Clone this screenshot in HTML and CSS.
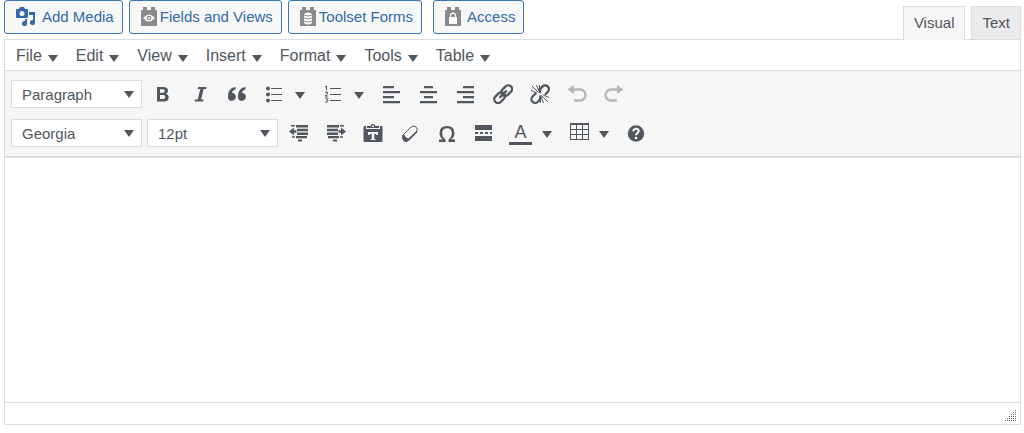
FILE: index.html
```html
<!DOCTYPE html>
<html lang="en">
<head>
    <meta charset="UTF-8">
    <meta name="viewport" content="width=device-width, initial-scale=1.0">
    <title>Edit Post</title>
    <link rel="stylesheet" href="styles.css">
</head>
<body>
    <div class="editor-tools">
        <div class="media-buttons">
            <button type="button" class="media-button">
                <svg class="media-icon" viewBox="0 0 20 20"><path fill-rule="evenodd" d="M1 2h2l1-2h4l1 2h2q1 0 1 1v7q0 1-1 1H1q-1 0-1-1V3q0-1 1-1zm5 2a2.500 2.500 0 1 0 0 5 2.500 2.500 0 0 0 0-5z"/><path d="M13 5h6v10.500a2.500 2.500 0 1 1-2-2.400V8h-4zM9 12h2v4.500a2.500 2.500 0 1 1-2-2.400z"/></svg>
                Add Media
            </button>
            <button type="button" class="media-button">
                <svg class="brick-icon" viewBox="0 0 16 19"><path d="M0 3h2V0h4v3h4V0h4v3h2v16H0z"/><path class="cut" d="M2 11q6-7 12 0-6 7-12 0z"/><circle cx="8" cy="11" r="2.300"/><circle class="cut" cx="8" cy="11" r="1"/></svg>
                Fields and Views
            </button>
            <button type="button" class="media-button">
                <svg class="brick-icon" viewBox="0 0 16 19"><path d="M0 3h2V0h4v3h4V0h4v3h2v16H0z"/><path class="cut" d="M4 7q4-3 8 0v9q-4 3-8 0z"/><path class="line" d="M4 8q4 2 8 0M4 11q4 2 8 0M4 14q4 2 8 0"/></svg>
                Toolset Forms
            </button>
            <button type="button" class="media-button access">
                <svg class="brick-icon" viewBox="0 0 16 19"><path d="M0 3h2V0h4v3h4V0h4v3h2v16H0z"/><path class="cut" fill-rule="evenodd" d="M4 10h1V8.500a3 3 0 0 1 6 0V10h1v7H4zm2.200 0h3.600V8.500a1.800 1.800 0 0 0-3.600 0z"/></svg>
                Access
            </button>
        </div>
        <div class="editor-tabs">
            <button type="button" class="tab active">Visual</button>
            <button type="button" class="tab">Text</button>
        </div>
    </div>

    <div class="editor">
        <div class="menubar">
            <button type="button" class="menu">File <span class="caret"></span></button>
            <button type="button" class="menu">Edit <span class="caret"></span></button>
            <button type="button" class="menu">View <span class="caret"></span></button>
            <button type="button" class="menu">Insert <span class="caret"></span></button>
            <button type="button" class="menu">Format <span class="caret"></span></button>
            <button type="button" class="menu">Tools <span class="caret"></span></button>
            <button type="button" class="menu">Table <span class="caret"></span></button>
        </div>

        <div class="toolbar">
            <div class="toolbar-row">
                <label class="listbox">
                    <select aria-label="Block format">
                        <option>Paragraph</option>
                        <option>Heading 1</option>
                        <option>Heading 2</option>
                        <option>Preformatted</option>
                    </select>
                    <span class="caret"></span>
                </label>
                <div class="button-group">
                    <button type="button" class="tool" aria-label="Bold">
                        <svg viewBox="0 0 20 20"><path fill-rule="evenodd" d="M4 3h6.500q4.500 0 4.500 3.700 0 2.500-2.300 3.100 3 .6 3 3.500 0 4.200-5 4.200H4zm3 2.300v3.500h2.800q2 0 2-1.800 0-1.700-2-1.700zm0 5.700v4.100h3q2.300 0 2.300-2.100 0-2-2.300-2z"/></svg>
                    </button>
                    <button type="button" class="tool" aria-label="Italic">
                        <svg viewBox="0 0 20 20"><path d="M8 3h8.500l-.4 2h-2.500l-2.500 10.500h2.500l-.4 2H4.700l.4-2h2.700L10.300 5H7.600z"/></svg>
                    </button>
                    <button type="button" class="tool" aria-label="Blockquote">
                        <svg viewBox="0 0 20 20"><path d="M8.500 3v2.500Q5.300 6 5 9a3.900 3.900 0 1 1-4 4.200Q.3 4.300 8.500 3zM18.500 3v2.500q-3.200.5-3.500 3.500a3.900 3.900 0 1 1-4 4.200Q10.300 4.300 18.500 3z"/></svg>
                    </button>
                    <button type="button" class="tool" aria-label="Bulleted list">
                        <svg viewBox="0 0 20 20"><circle cx="4" cy="4.500" r="1.900"/><circle cx="4" cy="10.500" r="1.900"/><circle cx="4" cy="16.500" r="1.900"/><path d="M7 4h11v1H7zm0 6h11v1H7zm0 6h11v1H7z"/></svg>
                    </button>
                    <button type="button" class="tool-arrow" aria-label="Bullet styles"><span class="caret"></span></button>
                    <button type="button" class="tool" aria-label="Numbered list">
                        <svg viewBox="0 0 20 20"><path d="M7 4h11v1H7zm0 6h11v1H7zm0 6h11v1H7z"/><path class="thin" d="M2 3l1.500-1v4.500M2 8.500q3-1.200 2.800.5Q4.500 10.500 2 12h3.200M2 14q3-.8 2.800.6-.1 1-1.800 1 2 0 2.100 1.300Q5 18.700 2 18"/></svg>
                    </button>
                    <button type="button" class="tool-arrow" aria-label="Number styles"><span class="caret"></span></button>
                    <button type="button" class="tool" aria-label="Align left">
                        <svg viewBox="0 0 20 20"><path d="M1 2h11v2.300H1zm0 5h17v2.300H1zm0 5h11v2.300H1zm0 5h17v2.300H1z"/></svg>
                    </button>
                    <button type="button" class="tool" aria-label="Align center">
                        <svg viewBox="0 0 20 20"><path d="M5 2h9v2.300H5zM1 7h17v2.300H1zm4 5h9v2.300H5zm-4 5h17v2.300H1z"/></svg>
                    </button>
                    <button type="button" class="tool" aria-label="Align right">
                        <svg viewBox="0 0 20 20"><path d="M7 2h11v2.300H7zM1 7h17v2.300H1zm6 5h11v2.300H7zm-6 5h17v2.300H1z"/></svg>
                    </button>
                    <button type="button" class="tool" aria-label="Insert link">
                        <svg viewBox="0 0 20 20"><g class="stroke" transform="rotate(-45 10 10)"><rect x="-1" y="6.500" width="12" height="7.500" rx="3.700"/><rect x="9" y="6.500" width="12" height="7.500" rx="3.700"/><path d="M5 10.200h10"/></g></svg>
                    </button>
                    <button type="button" class="tool" aria-label="Remove link">
                        <svg viewBox="0 0 20 20"><g class="stroke" transform="rotate(-45 10 10)"><path d="M8 6.500H3a3.500 3.500 0 0 0 0 7.500h3M13 14h4a3.500 3.500 0 0 0 0-7.500h-5M4 14q4 0 5-3M16 6.500q-4 0-5 3"/></g><path class="rays" d="M8.500 8.500L2 2M8.800 7L6.500 1M7 9L1 6.500M11.500 11.500L18 18M11.200 13l2.300 6M13 11l6 2.500M9.500 6.500V1M10.500 13.500V19"/></svg>
                    </button>
                    <button type="button" class="tool" aria-label="Undo" disabled>
                        <svg viewBox="0 0 20 20"><path d="M7 1v9L.5 5.500z"/><path class="stroke" d="M6 5.500h7a5 5 0 0 1 0 11H7"/></svg>
                    </button>
                    <button type="button" class="tool" aria-label="Redo" disabled>
                        <svg viewBox="0 0 20 20"><path d="M13 1v9l6.500-4.500z"/><path class="stroke" d="M14 5.500H7a5 5 0 0 0 0 11h6"/></svg>
                    </button>
                </div>
            </div>

            <div class="toolbar-row">
                <label class="listbox">
                    <select aria-label="Font family">
                        <option>Georgia</option>
                        <option>Arial</option>
                        <option>Verdana</option>
                    </select>
                    <span class="caret"></span>
                </label>
                <label class="listbox">
                    <select aria-label="Font size">
                        <option>12pt</option>
                        <option>14pt</option>
                        <option>18pt</option>
                    </select>
                    <span class="caret"></span>
                </label>
                <div class="button-group">
                    <button type="button" class="tool" aria-label="Decrease indent">
                        <svg viewBox="0 0 20 20"><path d="M7 2h12v2.500H7zm1 3.700h11v2.500H8zm0 3.700h11v2.500H8zM7 13h11v2.300H7zm2 3.500h4v2H9zM2 2h4v1.500H2zm1 11.300h3v1.500H3zM0 8.500L5 4.500v2.700h2.500v2.600H5v2.700z"/></svg>
                    </button>
                    <button type="button" class="tool" aria-label="Increase indent">
                        <svg viewBox="0 0 20 20"><path d="M1 2h12v2.500H1zm0 3.700h11v2.500H1zm0 3.700h11v2.500H1zM2 13h11v2.300H2zm5 3.500h4v2H7zM14 2h4v1.500h-4zm0 11.300h3v1.500h-3zm6-4.800l-5-4v2.700h-2.500v2.600H15v2.700z"/></svg>
                    </button>
                    <button type="button" class="tool" aria-label="Paste as text">
                        <svg viewBox="0 0 20 20"><path fill-rule="evenodd" d="M1.500 3H3v3h14V3h1.500q1 0 1 1v14q0 1-1 1h-17q-1 0-1-1V4q0-1 1-1zm3.500 6v3h1.500l.5-1h1.700v5H7.500v1h5v-1h-1.200v-5H13l.5 1H15V9z"/><path fill-rule="evenodd" d="M4 5V3h3.500a2.600 2.600 0 0 1 5 0H16v2zm6-2.800a1 1 0 1 0 0 2 1 1 0 0 0 0-2z"/></svg>
                    </button>
                    <button type="button" class="tool" aria-label="Clear formatting">
                        <svg viewBox="0 0 20 20"><path class="outline" d="M3 12l8-8q3-2 5 0t.8 4.500L9 17q-3 2.500-5 .5T3 12z"/><path d="M2.500 12l1.500-.8q1.500 4 4.500 4.200l8.500-8v2.400l-8.300 7.900q-3.500 2-5.500 0-1.700-2.400-.7-5.700z"/></svg>
                    </button>
                    <button type="button" class="tool" aria-label="Special character">
                        <svg viewBox="0 0 20 20"><path d="M2 19v-2.500h4Q2.500 14 2.500 10.300 2.500 3 10 3t7.500 7.300q0 3.700-3.500 6.200h4V19h-6.500v-2.500q3.300-2 3.300-6.200 0-5.100-4.800-5.100t-4.800 5.100q0 4.200 3.300 6.200V19z"/></svg>
                    </button>
                    <button type="button" class="tool" aria-label="Read more tag">
                        <svg viewBox="0 0 20 20"><path d="M1 2h17v5H1zm0 7h3v2H1zm5 0h3v2H6zm5 0h3v2h-3zm5 0h2v2h-2zM1 13h17v5H1z"/></svg>
                    </button>
                    <button type="button" class="tool text-color" aria-label="Text color"><span>A</span></button>
                    <button type="button" class="tool-arrow" aria-label="Choose text color"><span class="caret"></span></button>
                    <button type="button" class="tool table-tool" aria-label="Table">
                        <svg viewBox="0 0 20 20"><path fill-rule="evenodd" d="M1 0h19v17H1zm1 2v4h5V2zm6 0v4h5V2zm6 0v4h5V2zM2 7v4h5V7zm6 0v4h5V7zm6 0v4h5V7zM2 12v4h5v-4zm6 0v4h5v-4zm6 0v4h5v-4z"/></svg>
                    </button>
                    <button type="button" class="tool-arrow" aria-label="Table options"><span class="caret"></span></button>
                    <button type="button" class="tool help-tool" aria-label="Keyboard shortcuts">
                        <svg viewBox="0 0 20 20"><circle cx="10" cy="10.500" r="8.200"/><path class="question" d="M7.300 8.300Q7.500 5.700 10 5.700t2.600 2.300q0 1.500-1.600 2.500-1 .6-1 1.800"/><circle class="cut" cx="10" cy="15" r="1.300"/></svg>
                    </button>
                </div>
            </div>
        </div>

        <textarea class="content" aria-label="Content"></textarea>

        <div class="statusbar">
            <svg class="resize" viewBox="0 0 12 12"><path d="M0 11.500h12M2 9.500h10M4 7.500h8M6 5.500h6M8 3.500h4M10 1.500h2"/></svg>
        </div>
    </div>
</body>
</html>
```
FILE: styles.css
```css
* {
    box-sizing: border-box;
}
body {
    display: flex;
    flex-direction: column;
    min-height: 100vh;
    margin: 0;
    padding: 0 3px 8px 4px;
    background: #fff;
    color: #50575e;
    font-family: "Liberation Sans", Arial, sans-serif;
    font-size: 15px;
}
button, select, textarea {
    margin: 0;
    color: inherit;
    font: inherit;
}
svg {
    flex: none;
    fill: currentColor;
}

/* Media buttons and tabs */
.editor-tools {
    display: flex;
    justify-content: space-between;
    align-items: flex-end;
}
.media-buttons {
    display: flex;
    align-self: flex-start;
    gap: 6px;
}
.media-button {
    display: flex;
    align-items: center;
    height: 34px;
    padding: 0 8px 1px 11px;
    border: 1px solid #3c75b3;
    border-radius: 3px;
    background: #f6f7f7;
    color: #3569a8;
    white-space: nowrap;
}
.media-icon {
    width: 20px;
    height: 20px;
    margin-right: 6px;
}
.brick-icon {
    width: 16px;
    height: 19px;
    margin-right: 3px;
    fill: #8a8a8a;
}
.brick-icon .cut {
    fill: #fff;
}
.brick-icon .line {
    fill: none;
    stroke: #8a8a8a;
}
.access {
    margin-left: 5px;
}
.access .brick-icon {
    margin-right: 6px;
}
.editor-tabs {
    display: flex;
    align-items: flex-end;
    gap: 6px;
    padding-top: 6px;
}
.tab {
    height: 33px;
    padding: 0 10px 2px;
    border: 1px solid #dcdcde;
    border-bottom: 0;
    background: #ebebed;
}
.tab.active {
    position: relative;
    height: 34px;
    margin-bottom: -1px;
    padding-bottom: 3px;
    background: #f6f6f6;
}

/* Editor */
.editor {
    display: flex;
    flex: 1;
    flex-direction: column;
    border: 1px solid #dcdcde;
}
.menubar {
    display: flex;
    flex-wrap: wrap;
    padding-left: 2px;
    border-bottom: 1px solid #dcdcde;
}
.menu {
    display: flex;
    align-items: center;
    gap: 6px;
    height: 30px;
    padding: 2px 9px 0;
    border: 0;
    background: none;
    font-size: 16px;
}
.caret {
    width: 0;
    height: 0;
    border: 5px solid transparent;
    border-top: 7px solid #50575e;
    border-bottom: 0;
}
.menu .caret {
    margin-top: 4px;
}
.toolbar {
    display: flex;
    flex-direction: column;
    gap: 11px;
    padding: 9px 6px;
    border-bottom: 2px solid #dcdcde;
    background: #f6f6f6;
}
.toolbar-row {
    display: flex;
    flex-wrap: wrap;
    gap: 5px;
}
.listbox {
    position: relative;
    width: 131px;
}
.listbox select {
    width: 100%;
    height: 28px;
    padding: 0 10px;
    border: 1px solid #dcdcde;
    border-radius: 0;
    appearance: none;
    background: #fff;
}
.listbox .caret {
    position: absolute;
    top: 11px;
    right: 8px;
    pointer-events: none;
}
.button-group {
    display: flex;
    margin-left: -3px;
}
.tool, .tool-arrow {
    display: flex;
    align-items: center;
    justify-content: center;
    width: 37px;
    height: 28px;
    padding: 0;
    border: 0;
    background: none;
}
.tool svg {
    width: 20px;
    height: 20px;
}
.tool:disabled {
    color: #b4b6b8;
}
.tool-arrow {
    justify-content: flex-start;
    width: 22px;
    padding: 2px 0 0 3px;
}
.table-tool, .help-tool {
    width: 35px;
}
.text-color span {
    width: 23px;
    border-bottom: 3px solid #50575e;
    font-size: 18px;
    line-height: 20px;
}
.stroke, .rays, .thin, .outline, .question {
    fill: none;
    stroke: currentColor;
}
.stroke {
    stroke-width: 2.3;
}
.rays, .thin {
    stroke-width: 1;
}
.question {
    stroke: #fff;
    stroke-width: 2;
}
.tool .cut {
    fill: #fff;
}
.content {
    flex: 1;
    width: 100%;
    padding: 10px;
    border: 0;
    outline: 0;
    resize: none;
}
.statusbar {
    display: flex;
    align-items: flex-end;
    justify-content: flex-end;
    height: 22px;
    padding: 3px;
    border-top: 1px solid #dcdcde;
}
.resize {
    width: 12px;
    height: 12px;
    fill: none;
    stroke: #666;
    stroke-dasharray: 1 1;
}
```
